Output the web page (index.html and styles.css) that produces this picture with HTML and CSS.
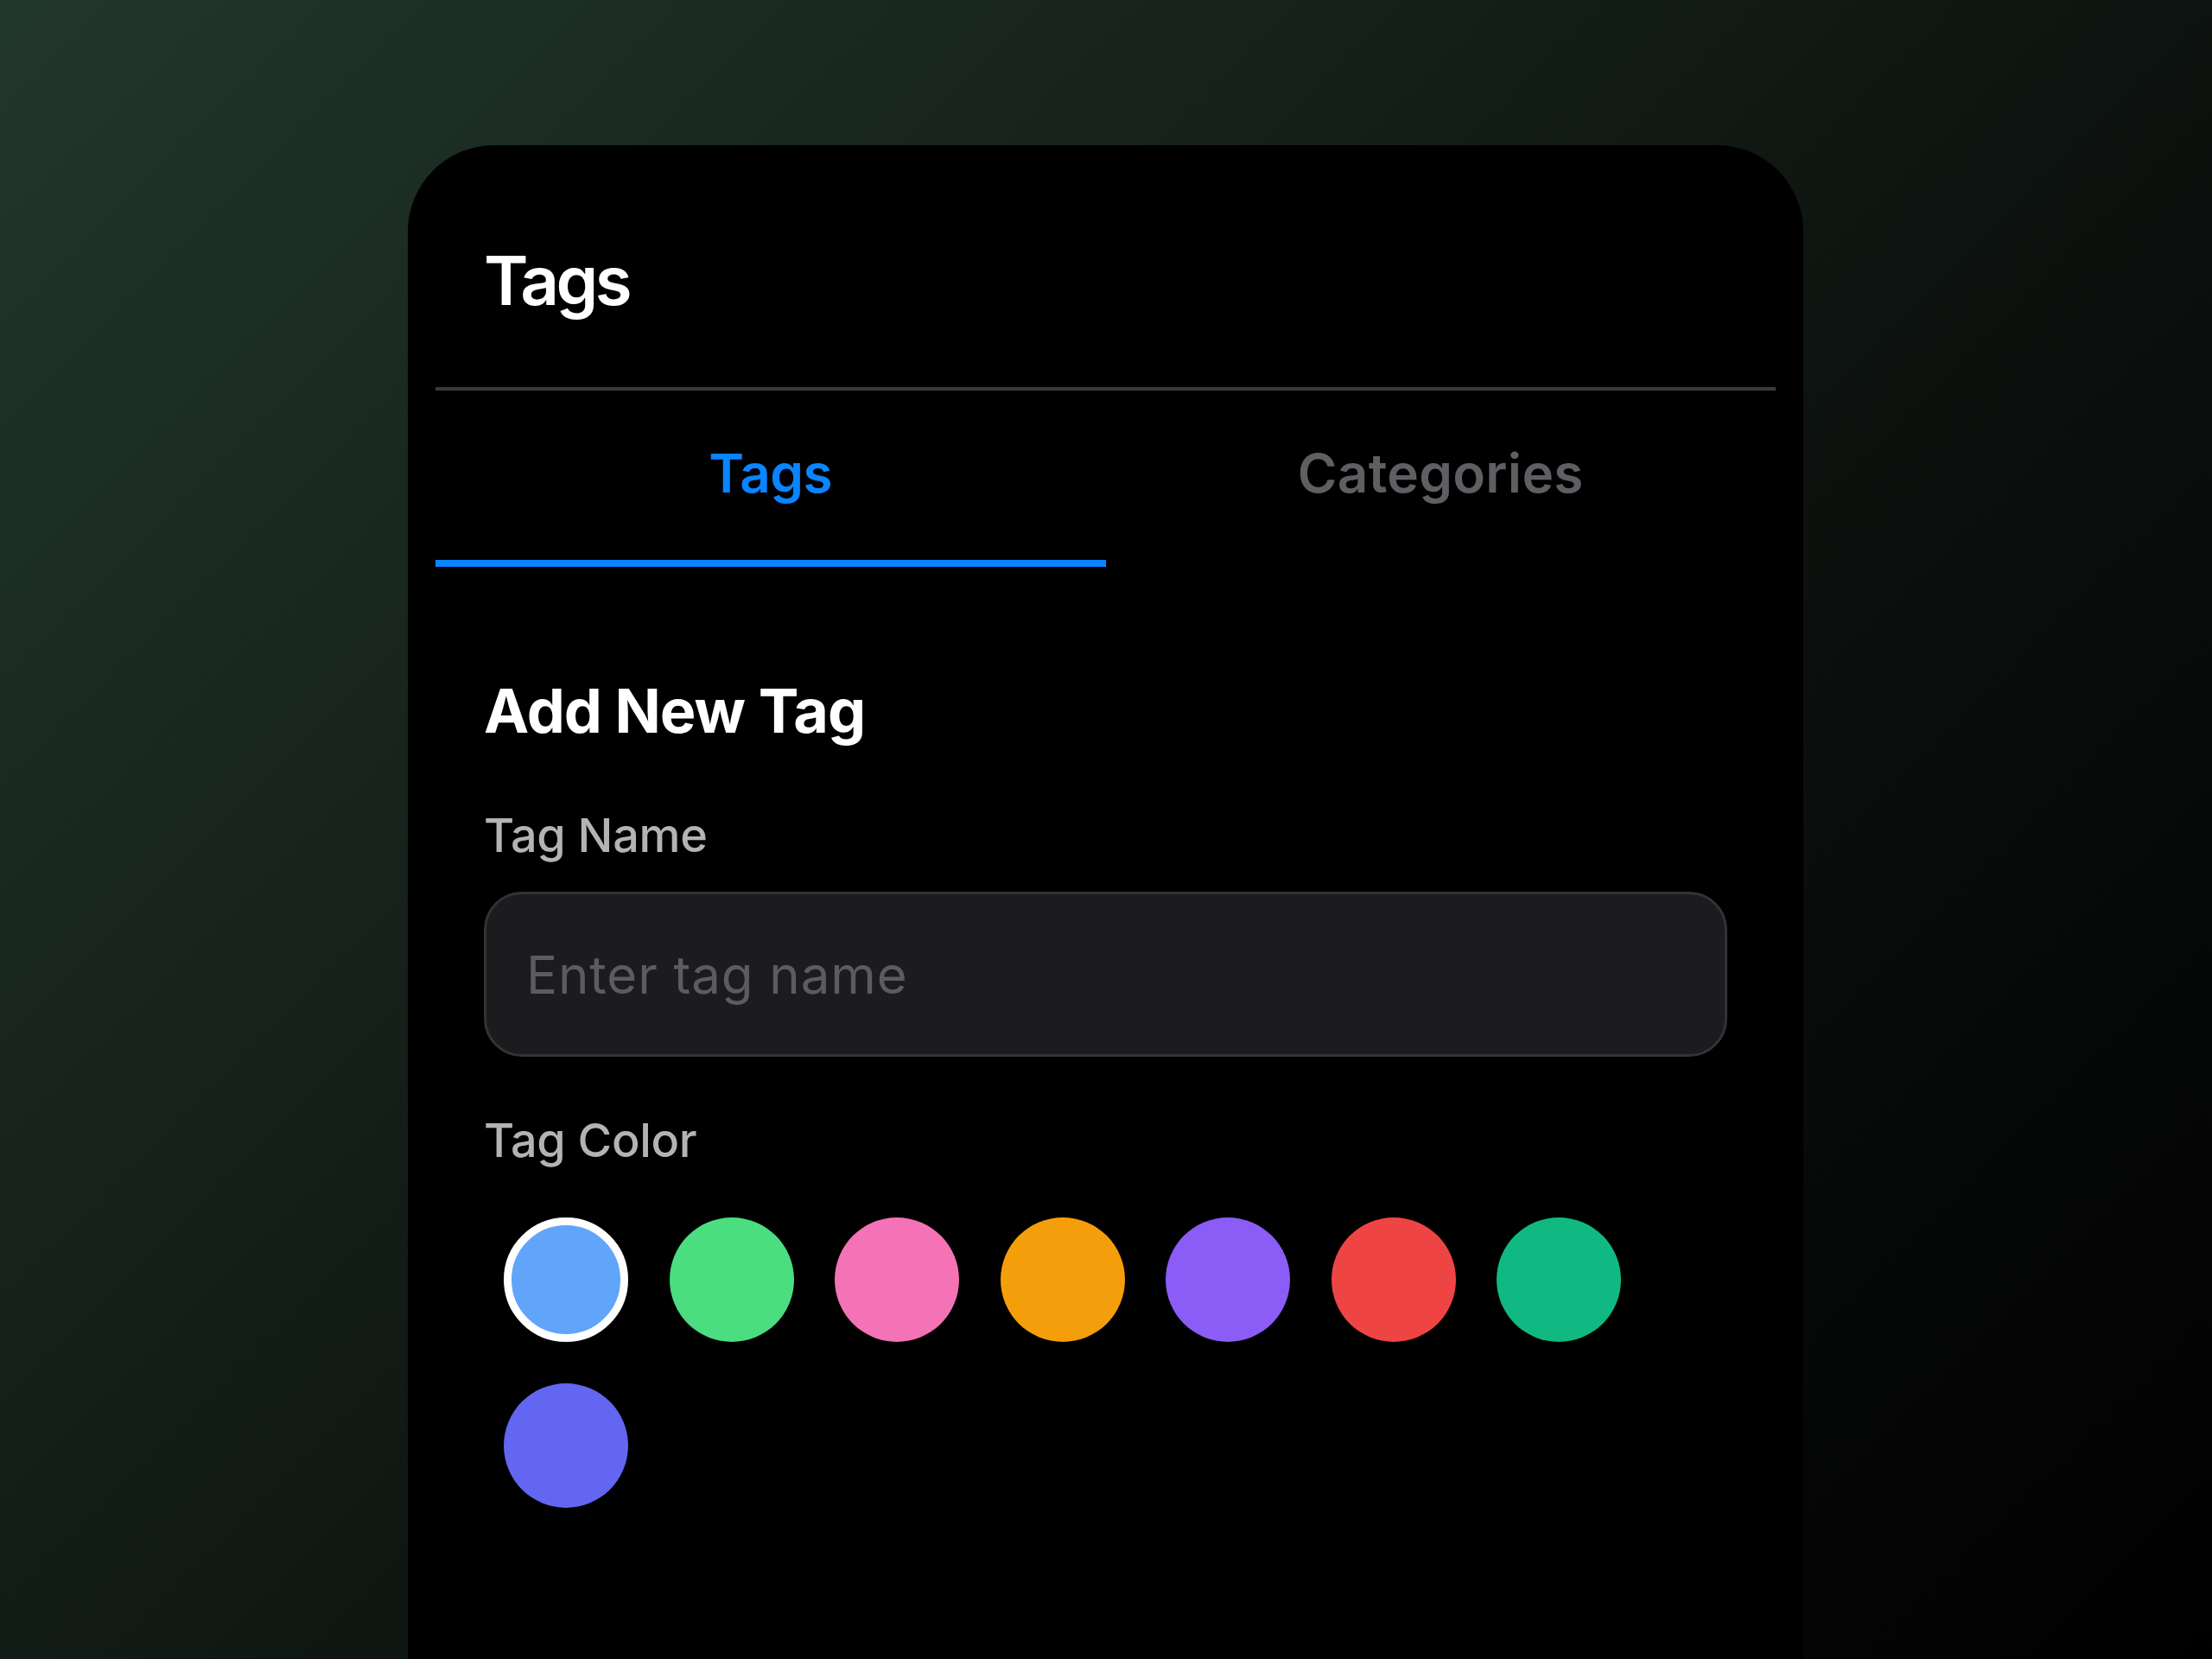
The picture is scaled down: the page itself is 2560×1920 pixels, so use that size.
FILE: index.html
```html
<!DOCTYPE html>
<html lang="en">
<head>
<meta charset="utf-8">
<title>Tags</title>
<link rel="stylesheet" href="styles.css">
</head>
<body>
<div class="stage">
  <div class="card">
    <header class="card-header">
      <h1 class="title">Tags</h1>
    </header>
    <div class="divider"></div>
    <nav class="tabs">
      <div class="tab tab-active">Tags</div>
      <div class="tab">Categories</div>
    </nav>
    <section class="content">
      <h2 class="section-title">Add New Tag</h2>
      <label class="field-label" for="tagName">Tag Name</label>
      <input class="text-input" id="tagName" type="text" placeholder="Enter tag name">
      <div class="field-label color-label">Tag Color</div>
      <div class="swatches">
        <span class="swatch swatch-selected" style="background:#60a5fa"></span>
        <span class="swatch" style="background:#4ade80"></span>
        <span class="swatch" style="background:#f472b6"></span>
        <span class="swatch" style="background:#f59e0b"></span>
        <span class="swatch" style="background:#8b5cf6"></span>
        <span class="swatch" style="background:#ef4444"></span>
        <span class="swatch" style="background:#10b981"></span>
        <span class="swatch" style="background:#6366f1"></span>
      </div>
    </section>
  </div>
</div>
</body>
</html>
```

FILE: styles.css
```css
* {
  box-sizing: border-box;
}

html, body {
  margin: 0;
  padding: 0;
}

body {
  width: 2560px;
  height: 1920px;
  overflow: hidden;
  background: linear-gradient(135deg, #22372b 0%, #17241c 30%, #0c110e 60%, #000000 100%);
  font-family: Inter, "Noto Sans", "Liberation Sans", sans-serif;
  color: #ffffff;
}

.stage {
  display: flex;
  padding-top: 168px;
  padding-left: 472px;
}

.card {
  width: 1615px;
  min-height: 1800px;
  background: #000000;
  border-radius: 100px 100px 0 0;
  padding: 0 32px;
}

.card-header {
  padding: 118px 0 84px 56px;
}

.title {
  margin: 0;
  font-size: 78px;
  line-height: 78px;
  font-weight: 600;
  letter-spacing: -3.5px;
}

.divider {
  height: 4px;
  background: #3a3a3c;
}

.tabs {
  display: grid;
  grid-template-columns: 1fr 1fr;
}

.tab {
  text-align: center;
  font-size: 62px;
  line-height: 62px;
  font-weight: 600;
  color: #5f5f63;
  padding: 65px 0 69px;
  border-bottom: 8px solid transparent;
  letter-spacing: 0.3px;
}

.tab-active {
  color: #0a84ff;
  border-bottom-color: #0a84ff;
  letter-spacing: -0.5px;
}

.content {
  display: flex;
  flex-direction: column;
  align-items: stretch;
  padding: 132px 56px 0;
}

.section-title {
  margin: 0;
  font-size: 70px;
  line-height: 70px;
  font-weight: 700;
  letter-spacing: -1px;
}

.field-label {
  display: block;
  margin-top: 82px;
  font-size: 54px;
  line-height: 54px;
  font-weight: 500;
  color: #b3b3b6;
  letter-spacing: -0.3px;
}

.text-input {
  margin-top: 38px;
  height: 191px;
  width: 100%;
  background: #1c1c1e;
  border: 3px solid #333336;
  border-radius: 44px;
  padding: 0 0 0 46px;
  font-family: inherit;
  font-size: 60px;
  letter-spacing: 0.9px;
  color: #ffffff;
  outline: none;
}

.text-input::placeholder {
  color: #5c5c60;
}

.color-label {
  margin-top: 70px;
}

.swatches {
  display: flex;
  flex-wrap: wrap;
  gap: 48px 47.5px;
  margin-top: 62px;
  padding: 0 23px;
}

.swatch {
  display: block;
  width: 144px;
  height: 144px;
  border-radius: 50%;
}

.swatch-selected {
  border: 9px solid #ffffff;
}
```
